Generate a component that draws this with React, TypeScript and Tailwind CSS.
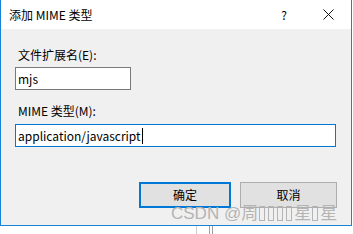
const font = { fontFamily: '"Noto Sans CJK SC", "Noto Sans", sans-serif' };

const CloseIcon = () => (
  <svg width="11" height="11" viewBox="0 0 11 11" className="block">
    <path d="M0.5 0.5 L10.5 10.5 M10.5 0.5 L0.5 10.5" stroke="#111" strokeWidth="1" fill="none" />
  </svg>
);

// missing-glyph box from the watermark
const Tofu = () => (
  <span className="inline-block w-[9px] h-[15px] align-[-2px] pl-[1px] pr-[2px]">
    <span className="block w-full h-full border border-[#b4b4b4]" />
  </span>
);

export default function App() {
  return (
    <div className="relative w-[353px] h-[234px] bg-white text-[12px] text-black" style={font}>
      <div className="w-[352px] h-[226px] flex flex-col border-l border-r border-b border-[#1883d7] bg-[#f0f0f0]">
        <div className="h-[29px] shrink-0 bg-white flex items-center pl-[8px]">
          <span className="leading-[16px]">添加 MIME 类型</span>
          <span className="ml-auto mr-[36px] leading-[16px]">?</span>
          <span className="mr-[17px]">
            <CloseIcon />
          </span>
        </div>

        <div className="flex flex-col pl-[14px] pr-[14px]">
          <div className="mt-[18px] pl-[3px] leading-[16px]">文件扩展名(E):</div>
          <div className="mt-[4px] w-[116px] h-[23px] border border-[#7a7a7a] bg-white flex items-center pl-[2px] leading-[16px]">
            mjs
          </div>

          <div className="mt-[13px] pl-[3px] leading-[16px]">MIME 类型(M):</div>
          <div className="mt-[5px] w-[321px] h-[23px] border border-[#0078d7] bg-white flex items-center pl-[2px] leading-[16px]">
            <span>application/javascript</span>
            <span className="ml-[1px] w-px h-[16px] bg-black" />
          </div>

          <div className="mt-[35px] flex justify-end gap-[9px]">
            <div className="w-[92px] h-[26px] border-2 border-[#0078d7] bg-[#e1e1e1] flex items-center justify-center">
              确定
            </div>
            <div className="w-[97px] h-[26px] border border-[#adadad] bg-[#e1e1e1] flex items-center justify-center">
              取消
            </div>
          </div>
        </div>
      </div>

      <div className="flex h-[8px]">
        <div className="ml-[196px] w-px h-[8px] bg-[#d0d0d0]" />
        <div className="ml-[12px] w-px h-[8px] bg-[#a0a0a0]" />
        <div className="ml-[2px] w-px h-[8px] bg-[#a0a0a0]" />
      </div>

      <div
        className="absolute left-[171px] top-[204px] text-[17px] leading-[20px] text-[#b4b4b4] whitespace-nowrap"
        style={{ fontFamily: '"Liberation Sans", "Noto Sans CJK SC", sans-serif' }}
      >
        CSDN @周<Tofu /><Tofu /><Tofu /><Tofu />星<Tofu />星
      </div>
    </div>
  );
}
